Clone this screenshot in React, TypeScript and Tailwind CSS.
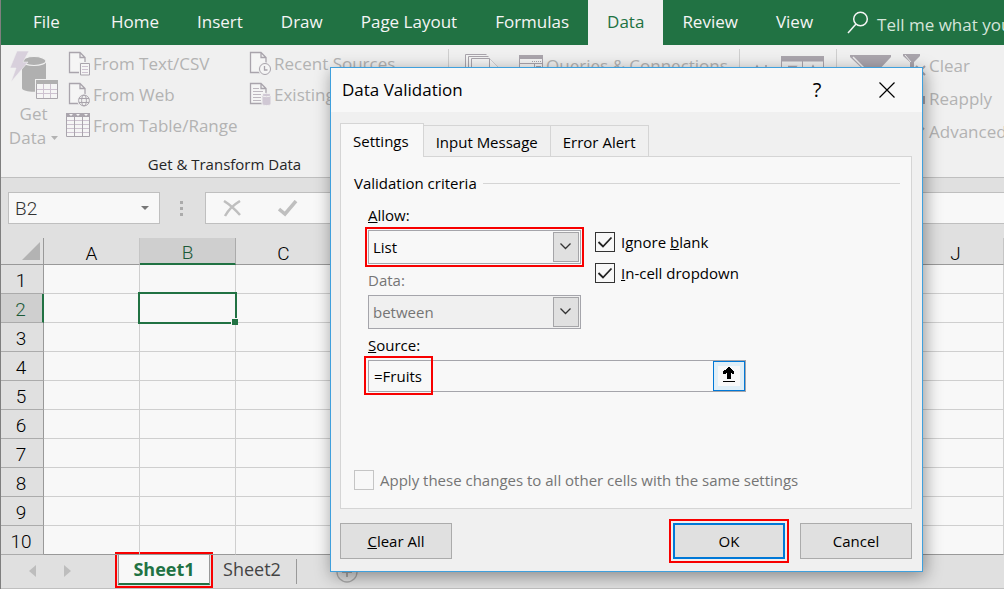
import React from "react";

const tabs = ["File", "Home", "Insert", "Draw", "Page Layout", "Formulas", "Data", "Review", "View"];
const columns = ["A", "B", "C", "D", "E", "F", "G", "H", "I", "J"];
const rows = [1, 2, 3, 4, 5, 6, 7, 8, 9, 10];

const PageShape = () => (
  <path d="M3.500 1.500h10.500l5 5V21.500H3.500z M14 1.500v5h5" fill="#f5f5f5" stroke="#a9a4ac" strokeWidth="1.300" />
);

const TextFileIcon = () => (
  <svg width="24" height="26" viewBox="0 0 24 26" className="shrink-0" aria-hidden="true">
    <PageShape />
    <path d="M13 11h11v14H13z" fill="#f0f0f0" />
    <path d="M14.500 12.500h9v11.500h-9z" fill="#f5f5f5" stroke="#a9a4ac" />
    <path d="M16 15.500h6M16 18.500h6M16 21.500h6" stroke="#cdc2d0" />
  </svg>
);

const WebFileIcon = () => (
  <svg width="24" height="26" viewBox="0 0 24 26" className="shrink-0" aria-hidden="true">
    <PageShape />
    <circle cx="18" cy="18.500" r="6.800" fill="#f0f0f0" />
    <g fill="none" stroke="#a9a4ac">
      <circle cx="18" cy="18.500" r="5.400" />
      <ellipse cx="18" cy="18.500" rx="2.400" ry="5.400" />
      <path d="M13 16.500h10M13 20.500h10" />
    </g>
  </svg>
);

const TableIcon = () => (
  <svg width="24" height="26" viewBox="0 0 24 26" className="shrink-0" aria-hidden="true">
    <path d="M.5 .5h23v23H.5z" fill="#f5f5f5" stroke="#a9a4ac" />
    <path d="M0 0h24v4H0z" fill="#aaa5ad" />
    <path d="M3 1h4l-2 2zM10 1h4l-2 2zM18 1h4l-2 2z" fill="#f5f5f5" />
    <path d="M1 7.500h22M1 11.500h22M1 15.500h22M1 19.500h22" stroke="#cdc2d0" />
    <path d="M8.500 4v19M16.500 4v19" stroke="#a9a4ac" />
  </svg>
);

const RecentIcon = () => (
  <svg width="24" height="26" viewBox="0 0 24 26" className="shrink-0" aria-hidden="true">
    <PageShape />
    <circle cx="18" cy="18" r="6.800" fill="#f0f0f0" />
    <circle cx="18" cy="18" r="5.500" fill="#f5f5f5" stroke="#a9a4ac" />
    <path d="M17.500 15v4h3" fill="none" stroke="#a9a4ac" strokeWidth="1.300" />
  </svg>
);

const ExistingIcon = () => (
  <svg width="24" height="26" viewBox="0 0 24 26" className="shrink-0" aria-hidden="true">
    <PageShape />
    <path d="M6 6.500h6M6 9.500h10M6 12.500h8M6 15.500h8M6 18.500h8" stroke="#bdb7bf" />
    <path d="M15 13v9c0 2 9 2 9 0v-9z" fill="#d0c8d4" stroke="#f0f0f0" />
    <ellipse cx="19.500" cy="13" rx="4.500" ry="1.700" fill="#d0c8d4" stroke="#f0f0f0" />
  </svg>
);

const GetDataIcon = () => (
  <svg width="48" height="49" viewBox="0 0 48 49" aria-hidden="true">
    <path d="M12 9v28c0 5 24 5 24 0V9z" fill="#b0b0b0" />
    <ellipse cx="24" cy="10" rx="12" ry="4.500" fill="#b0b0b0" stroke="#f0f0f0" strokeWidth="1.200" />
    <path d="M7 0h12l-6 11h5L1 31l5-14H0z" fill="#d8d0dc" stroke="#f0f0f0" strokeWidth=".6" />
    <path d="M25 28h23v21H25z" fill="#f0f0f0" />
    <path d="M26.500 29.500h21v18h-21z" fill="#f5f5f5" stroke="#aaa6ac" />
    <path d="M26 29h22v4H26z" fill="#b0b0b0" />
    <path d="M27 38.500h20M27 42.500h20M33.500 33v14M40.500 33v14" stroke="#cdc2d0" />
  </svg>
);

const Chevron = () => (
  <svg width="11" height="7" viewBox="0 0 11 7" aria-hidden="true">
    <path d="M.5.5l5 5 5-5" fill="none" stroke="#333" strokeWidth="1.300" />
  </svg>
);

const RibbonButton = ({ icon, label }: { icon?: React.ReactNode; label: string }) => (
  <button type="button" disabled className="flex items-center gap-[3px] whitespace-nowrap">
    {icon}
    {label}
  </button>
);

const RibbonTabs = () => (
  <nav className="flex h-[45px] overflow-hidden bg-[#217243] text-[17px] text-[#f5f5f5]">
    {tabs.map((tab) => (
      <button
        key={tab}
        type="button"
        className={`shrink-0 px-[19px] pb-px first:px-8 ${tab === "Data" ? "bg-[#f0f0f0] text-[#217243]" : ""}`}
      >
        {tab}
      </button>
    ))}
    <button type="button" className="flex shrink-0 items-center gap-2 pt-1 pl-[15px] text-[#d5e5da]">
      <svg width="22" height="24" viewBox="0 0 22 24" className="mb-1" fill="none" stroke="#f5f5f5" strokeWidth="1.500" aria-hidden="true">
        <circle cx="13.500" cy="8" r="6.800" />
        <path d="M9 13L1 22" />
      </svg>
      Tell me what you
    </button>
  </nav>
);

const Ribbon = () => (
  <section className="flex h-[133px] overflow-hidden border-b border-[#bfbfbf] bg-[#f0f0f0] pt-1 text-[17px] text-[#b3b3b3]">
    <div className="flex w-[448px] shrink-0 flex-col border-r border-[#cfcfcf]">
      <div className="flex">
        <button type="button" disabled className="flex w-[65px] flex-col items-center pt-[2px] leading-6">
          <GetDataIcon />
          <span className="pt-[2px]">Get</span>
          <span className="flex items-center gap-[5px]">
            Data
            <svg width="7" height="4" viewBox="0 0 7 4" aria-hidden="true">
              <path d="M0 0h7L3.500 4z" fill="#b3b3b3" />
            </svg>
          </span>
        </button>
        <div className="flex w-[181px] flex-col gap-[5px] pt-[2px] leading-[26px]">
          <RibbonButton icon={<TextFileIcon />} label="From Text/CSV" />
          <RibbonButton icon={<WebFileIcon />} label="From Web" />
          <RibbonButton icon={<TableIcon />} label="From Table/Range" />
        </div>
        <div className="flex flex-col gap-[5px] pt-[2px] leading-[26px]">
          <RibbonButton icon={<RecentIcon />} label="Recent Sources" />
          <RibbonButton icon={<ExistingIcon />} label="Existing" />
        </div>
      </div>
      <p className="pt-[2px] text-center text-[15px] leading-6 text-[#262626]">Get &amp; Transform Data</p>
    </div>
    <div className="flex w-[291px] shrink-0 items-start gap-[18px] border-r border-[#cfcfcf] pt-1 pl-4">
      <svg width="36" height="30" viewBox="0 0 36 30" fill="#f5f5f5" stroke="#a9a4ac" aria-hidden="true">
        <path d="M.5 20V1.500h21M3.500 22V3.500h20M6.500 24V5.500h18l9 9v10z" />
        <path d="M24.500 5.500v9h9" />
      </svg>
      <button type="button" disabled className="flex items-center gap-[3px] leading-[26px] whitespace-nowrap">
        <svg width="24" height="24" viewBox="0 0 24 24" aria-hidden="true">
          <path d="M.5 1.500h23v21H.5z" fill="#f5f5f5" stroke="#a9a4ac" />
          <path d="M0 1h24v4H0z" fill="#aaa5ad" />
          <path d="M13 7.500h9" stroke="#a9a4ac" strokeDasharray="1 1" />
          <path d="M1 9.500h22M15.500 10v13M17 12.500h5M17 15.500h5" stroke="#a9a4ac" />
        </svg>
        Queries &amp; Connections
      </button>
    </div>
    <div className="flex w-[97px] shrink-0 items-start gap-3 border-r border-[#cfcfcf] pt-[7px] pl-3">
      <svg width="17" height="30" viewBox="0 0 17 30" fill="none" stroke="#a9a4ac" strokeWidth="1.500" aria-hidden="true">
        <path d="M1 17l4-7 4 7M14 9v12" />
      </svg>
      <svg width="43" height="30" viewBox="0 0 43 30" fill="none" stroke="#a9a4ac" aria-hidden="true">
        <path d="M.5.5h42v29H.5zM21.500 5v24" />
        <path d="M0 0h43v5.500H0z" fill="#aaa5ad" stroke="none" />
        <path d="M7 10.500h8l-8 9M28 18l4-8 4 8" strokeWidth="1.500" />
      </svg>
    </div>
    <div className="flex min-w-0 grow gap-[12px] pt-[4px] pl-[13px]">
      <svg width="41" height="36" viewBox="0 0 41 36" className="shrink-0" aria-hidden="true">
        <path d="M0 2h41v2L26 20v12l-9 4V20L0 4z" fill="#aaa5ad" />
        <path d="M3 4l16 16v12" fill="none" stroke="#f0f0f0" strokeWidth="1.500" />
      </svg>
      <div className="flex flex-col gap-[7px] leading-[26px]">
        <RibbonButton
          label="Clear"
          icon={
            <svg width="23" height="26" viewBox="0 0 23 26" className="shrink-0" stroke="#a9a4ac" aria-hidden="true">
              <path d="M0 1h17v2l-6 6v8l-4 2V9L0 3z" fill="#aaa5ad" stroke="none" />
              <path d="M2 2l6 7" stroke="#f0f0f0" />
              <path d="M13 13l9 9M22 13l-9 9" strokeWidth="2" />
            </svg>
          }
        />
        <RibbonButton
          label="Reapply"
          icon={
            <svg width="23" height="26" viewBox="0 0 23 26" className="shrink-0" fill="none" stroke="#a9a4ac" strokeWidth="2" aria-hidden="true">
              <path d="M12 8a6 6 0 1 0 9 7M21 10v7h-5" />
            </svg>
          }
        />
        <RibbonButton
          label="Advanced"
          icon={
            <svg width="23" height="26" viewBox="0 0 23 26" className="shrink-0" stroke="#a9a4ac" strokeWidth="2" aria-hidden="true">
              <path d="M10 20L21 9" />
            </svg>
          }
        />
      </div>
    </div>
  </section>
);

const FormulaBar = () => (
  <div className="flex items-center bg-[#e0e0e0] py-[14px] pl-[7px]">
    <div className="flex h-8 w-[152px] items-center border border-[#bfbfbf] bg-[#f8f8f8] pr-[10px] pl-[6px]">
      <input aria-label="Name Box" defaultValue="B2" className="w-full min-w-0 pt-[2px] font-[Roboto] text-[19px] font-light text-[#333] outline-none" />
      <svg width="8" height="4" viewBox="0 0 8 4" className="shrink-0" aria-hidden="true">
        <path d="M0 0h8L4 4z" fill="#777" />
      </svg>
    </div>
    <svg width="45" height="16" viewBox="0 0 45 16" fill="#ababab" aria-hidden="true">
      <path d="M20 1h3v3h-3zM20 7h3v3h-3zM20 13h3v3h-3z" />
    </svg>
    <div className="flex h-8 grow items-center gap-9 border-y border-l border-[#bfbfbf] bg-[#f8f8f8] pl-[17px]">
      <button type="button" aria-label="Cancel entry">
        <svg width="19" height="17" viewBox="0 0 19 17" fill="none" stroke="#bfbfbf" strokeWidth="2.500" aria-hidden="true">
          <path d="M1 1q8 5 16 14M17 1Q7 7 2 16" />
        </svg>
      </button>
      <button type="button" aria-label="Enter">
        <svg width="20" height="17" viewBox="0 0 20 17" fill="none" stroke="#bfbfbf" strokeWidth="3.500" aria-hidden="true">
          <path d="M1 9l6 5L18 1" />
        </svg>
      </button>
      <input aria-label="Formula" className="min-w-0 grow outline-none" />
    </div>
  </div>
);

const Sheet = () => (
  <table className="w-full table-fixed border-separate border-spacing-0 bg-[#f8f8f8] font-[Roboto] text-[19px] leading-5 font-light text-black">
    <thead>
      <tr className="h-[27px] bg-[#e0e0e0]">
        <th className="w-[43px] border-r border-b border-[#999] p-0">
          <svg width="18" height="18" viewBox="0 0 18 18" className="mr-[3px] ml-auto" aria-hidden="true">
            <path d="M18 0v18H0z" fill="#b3b3b3" />
          </svg>
        </th>
        {columns.map((col) => (
          <th
            key={col}
            scope="col"
            className={`border-r p-0 pt-[5px] font-light ${
              col === "B" ? "border-b-2 border-r-[#ababab] border-b-[#217243] bg-[#cfcfcf] text-[#1c5a38]" : "border-b border-r-[#c5c5c5] border-b-[#999]"
            }`}
          >
            {col}
          </th>
        ))}
      </tr>
    </thead>
    <tbody>
      {rows.map((row) => (
        <tr key={row} className="h-[29px]">
          <th
            scope="row"
            className={`border-b p-0 pt-[3px] pr-[2px] font-light ${
              row === 2 ? "border-r-2 border-r-[#217243] border-b-[#ababab] bg-[#cfcfcf] text-[#1c5a38]" : "border-r border-r-[#999] border-b-[#ababab] bg-[#e0e0e0]"
            }`}
          >
            {row}
          </th>
          {columns.map((col) => (
            <td key={col} className={`relative border-r border-b border-r-[#cfcfcf] p-0 ${row === 10 ? "border-b-[#999]" : "border-b-[#cfcfcf]"}`}>
              {row === 2 && col === "B" && (
                <span className="absolute -top-[2px] -right-[2px] -bottom-[2px] -left-[2px] z-10 border-2 border-[#217243]">
                  <span className="absolute -right-[3px] -bottom-[3px] size-[7px] border-t border-l border-[#f8f8f8] bg-[#217243]" />
                </span>
              )}
            </td>
          ))}
        </tr>
      ))}
    </tbody>
  </table>
);

const SheetTabs = () => (
  <footer className="flex h-[34px] items-start border-b border-[#bfbfbf] bg-[#e0e0e0] text-[18px] leading-7">
    <div className="flex w-[117px] gap-7 pt-[10px] pl-7">
      <button type="button" aria-label="Previous sheet">
        <svg width="7" height="12" viewBox="0 0 7 12" aria-hidden="true">
          <path d="M7 0v12L0 6z" fill="#bdbdbd" />
        </svg>
      </button>
      <button type="button" aria-label="Next sheet">
        <svg width="7" height="12" viewBox="0 0 7 12" aria-hidden="true">
          <path d="M0 0v12l7-6z" fill="#bdbdbd" />
        </svg>
      </button>
    </div>
    <button
      type="button"
      className="w-[92px] border-x border-b-2 border-x-[#999] border-b-[#217243] bg-[#f8f8f8] font-bold text-[#217243] outline-2 outline-offset-1 outline-[#f80000]"
    >
      Sheet1
    </button>
    <button type="button" className="w-[86px] pr-[2px] text-[#444]">
      Sheet2
    </button>
    <span className="mt-1 h-[25px] w-px bg-[#999]" />
    <button type="button" aria-label="New sheet" className="ml-[39px] pt-[6px]">
      <svg width="22" height="22" viewBox="0 0 22 22" fill="none" stroke="#aaa" strokeWidth="1.300" aria-hidden="true">
        <circle cx="11" cy="11" r="10" />
        <path d="M11 6v10M6 11h10" strokeWidth="2" />
      </svg>
    </button>
  </footer>
);

const SelectField = ({ id, label, value, disabled, marked }: { id: string; label: React.ReactNode; value: string; disabled?: boolean; marked?: boolean }) => (
  <div>
    <label htmlFor={id} className={`block pb-[6px] leading-[18px] ${disabled ? "text-[#757575]" : ""}`}>
      {label}
    </label>
    <div className={`relative w-[213px] ${marked ? "outline-2 outline-offset-1 outline-[#f80000]" : ""}`}>
      <select
        id={id}
        disabled={disabled}
        defaultValue={value}
        className="block h-[34px] w-full appearance-none border border-[#a5a5ab] pl-1 opacity-100 outline-none disabled:bg-[#f0f0f0] disabled:text-[#757575]"
      >
        <option>{value}</option>
      </select>
      <span className="pointer-events-none absolute inset-y-[2px] right-[2px] flex w-[26px] items-center justify-center border border-[#a5a5a8] bg-[#e0e0e0] pr-[2px] pb-[2px]">
        <Chevron />
      </span>
    </div>
  </div>
);

const CheckField = ({ children, checked, disabled }: { children: React.ReactNode; checked?: boolean; disabled?: boolean }) => (
  <label className={`flex items-center gap-[6px] leading-5 ${disabled ? "text-[#757575]" : ""}`}>
    <span className="relative size-5 shrink-0">
      <input
        type="checkbox"
        defaultChecked={checked}
        disabled={disabled}
        className="peer block size-5 appearance-none border border-[#333] disabled:border-[#c5c5c5]"
      />
      <svg viewBox="0 0 20 20" className="pointer-events-none absolute inset-0 hidden peer-checked:block" fill="none" stroke="#222" strokeWidth="1.800" aria-hidden="true">
        <path d="M3.500 10l4.500 4.500L16.500 5.500" />
      </svg>
    </span>
    <span>{children}</span>
  </label>
);

const dialogButton = "h-9 w-28 bg-[#e0e0e0]";

const DataValidationDialog = () => (
  <div
    role="dialog"
    aria-labelledby="dialog-title"
    className="absolute top-[67px] left-[329px] z-20 w-[593px] border border-[#3fa0dd] bg-[#f0f0f0] text-[15px] text-black shadow-[2px_4px_16px_rgba(0,0,0,0.4)]"
  >
    <header className="flex h-11 items-center bg-[#f8f8f8] pl-[11px]">
      <h1 id="dialog-title" className="grow text-[17px]">
        Data Validation
      </h1>
      <button type="button" aria-label="Help" className="w-[70px] text-[20px]">
        ?
      </button>
      <button type="button" aria-label="Close" className="flex w-[70px] justify-center">
        <svg width="16" height="16" viewBox="0 0 16 16" stroke="#000" strokeWidth="1.200" aria-hidden="true">
          <path d="M.5.5l15 15M15.500.5l-15 15" />
        </svg>
      </button>
    </header>
    <div className="pt-[11px] pr-[10px] pb-3 pl-[9px]">
      <div role="tablist" className="flex items-end">
        <button type="button" role="tab" aria-selected="true" className="z-10 -mb-px h-[34px] border border-b-0 border-[#d5d5d5] bg-[#f8f8f8] pt-[2px] pr-[14px] pl-3">
          Settings
        </button>
        <button type="button" role="tab" aria-selected="false" className="h-[31px] border-t border-r border-[#d5d5d5] px-3 pt-[2px]">
          Input Message
        </button>
        <button type="button" role="tab" aria-selected="false" className="h-[31px] border-t border-r border-[#d5d5d5] px-3 pt-[2px]">
          Error Alert
        </button>
      </div>
      <div role="tabpanel" className="border border-[#d5d5d5] bg-[#f8f8f8] px-[11px] pt-[15px] pb-[18px] pl-[13px]">
        <fieldset>
          <legend className="flex w-full items-center gap-[6px] leading-[22px] after:h-px after:grow after:bg-[#d5d5d5]">Validation criteria</legend>
          <div className="flex flex-col gap-[7px] pt-3 pl-[14px]">
            <div className="flex items-start gap-[14px]">
              <div className="flex flex-col gap-[7px]">
                <SelectField id="allow" value="List" marked label={<><u>A</u>llow:</>} />
                <SelectField id="data" value="between" disabled label="Data:" />
              </div>
              <div className="flex flex-col gap-[11px] pt-[26px]">
                <CheckField checked>
                  Ignore <u>b</u>lank
                </CheckField>
                <CheckField checked>
                  <u>I</u>n-cell dropdown
                </CheckField>
              </div>
            </div>
            <div>
              <label htmlFor="source" className="block pb-[6px] leading-[18px]">
                <u>S</u>ource:
              </label>
              <div className="relative flex h-8 w-[378px] border border-[#a5a5ab]">
                <input id="source" defaultValue="=Fruits" className="min-w-0 grow pl-[5px] outline-none" />
                <button type="button" aria-label="Collapse dialog" className="flex w-8 items-center justify-center border border-[#0078d7] bg-[#e0eff8]">
                  <svg width="22" height="20" viewBox="0 0 22 20" aria-hidden="true">
                    <path d="M0 0h22v20H0z" fill="#f8f8f8" />
                    <path d="M10 1h2v1h1v1h1v1h1v1h1v3h-2V7h-1v6H9V7H8v1H5V5h1V4h2V3h1V2h1zM5 15h12v1H5z" />
                  </svg>
                </button>
                <span className="pointer-events-none absolute -top-[5px] -bottom-1 -left-[5px] w-[69px] border-2 border-[#f80000]" />
              </div>
            </div>
          </div>
        </fieldset>
        <div className="pt-[78px]">
          <CheckField disabled>Apply these changes to all other cells with the same settings</CheckField>
        </div>
      </div>
      <div className="flex pt-[14px]">
        <button type="button" className={`${dialogButton} border border-[#ababab]`}>
          <u>C</u>lear All
        </button>
        <button type="button" className={`${dialogButton} ml-auto border-2 border-[#0078d7] outline-2 outline-offset-2 outline-[#f80000]`}>
          OK
        </button>
        <button type="button" className={`${dialogButton} ml-[15px] border border-[#ababab]`}>
          Cancel
        </button>
      </div>
    </div>
  </div>
);

const App = () => (
  <main className="relative min-h-screen overflow-hidden border-l border-[#7f7f7f] bg-[#e0e0e0] font-['Open_Sans',sans-serif]">
    <RibbonTabs />
    <Ribbon />
    <FormulaBar />
    <Sheet />
    <SheetTabs />
    <DataValidationDialog />
  </main>
);

export default App;
